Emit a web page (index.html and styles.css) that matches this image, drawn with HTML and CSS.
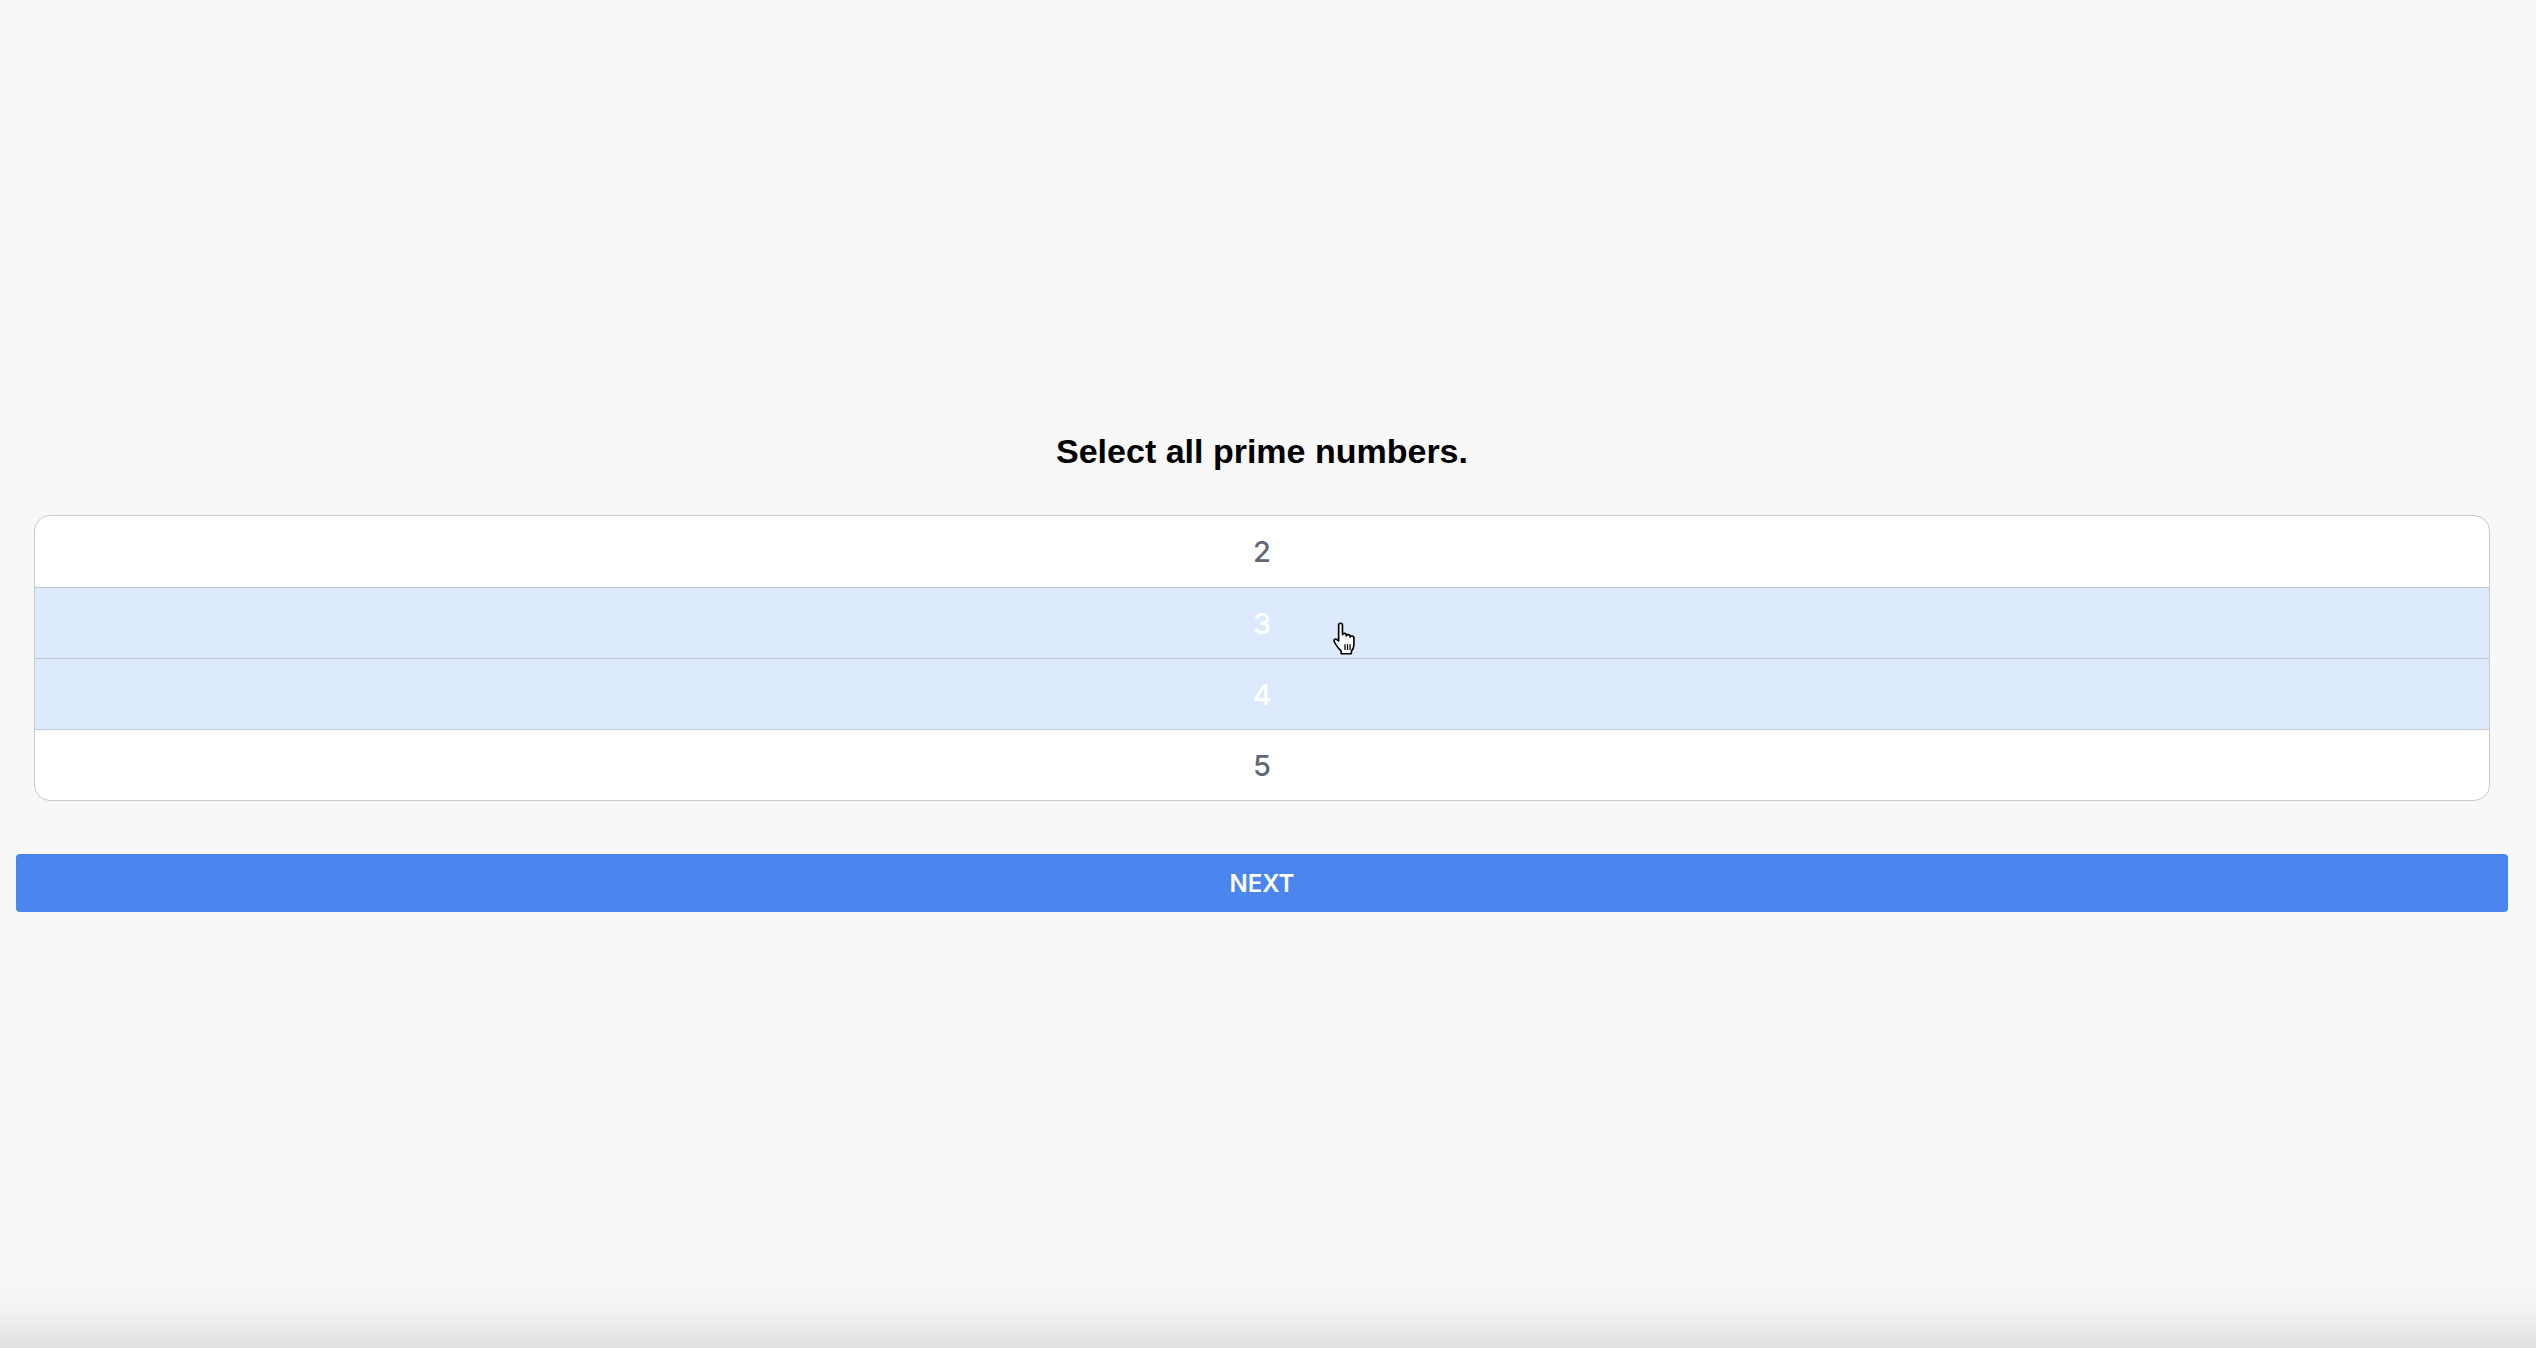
FILE: index.html
```html
<!DOCTYPE html>
<html lang="en">
<head>
<meta charset="utf-8">
<title>Quiz</title>
<link rel="stylesheet" href="styles.css">
</head>
<body>
<main class="page">
  <h1 class="question">Select all prime numbers.</h1>
  <ul class="options">
    <li class="option">2</li>
    <li class="option selected">3</li>
    <li class="option selected">4</li>
    <li class="option">5</li>
  </ul>
  <button class="next" type="button">NEXT</button>
</main>
<svg class="cursor" width="26" height="33" viewBox="0 0 20 26" aria-hidden="true">
  <path d="M5 2.5 Q5 1 6.5 1 Q8 1 8 2.5 V10 Q8 9 9.5 9 Q11 9 11 10.5 V11 Q11 10 12.5 10 Q14 10 14 11.5 V12 Q14 11 15.5 11 Q17 11 17 12.5 V18 Q17 21 15 23 V25 H7 V23 Q5 21 3 18 L1.5 15.5 Q1 14 2.5 13.5 Q3.5 13.3 4.5 14.5 L5 15 Z" fill="#fff" stroke="#000" stroke-width="1.3" stroke-linejoin="round"/>
  <path d="M10 17.5 V22 M12 17.5 V22 M14 17.5 V22" stroke="#000" stroke-width="1"/>
</svg>
<div class="edge-shade"></div>
</body>
</html>
```

FILE: styles.css
```css
html, body {
  margin: 0;
  padding: 0;
  background: #f8f8f8;
  height: 100%;
}

body {
  font-family: "Liberation Sans", Arial, sans-serif;
  overflow: hidden;
}

.page {
  display: flex;
  flex-direction: column;
  padding: 431px 28px 0 16px;
}

.question {
  margin: 0;
  font-size: 34px;
  line-height: 41px;
  font-weight: 700;
  color: #000;
  text-align: center;
}

.options {
  list-style: none;
  margin: 43px 18px 0 18px;
  padding: 0;
  background: #fff;
  border: 1px solid #c9c9c9;
  border-radius: 16px;
  overflow: hidden;
}

.option {
  height: 70px;
  display: flex;
  align-items: center;
  justify-content: center;
  font-family: Inter, "Liberation Sans", sans-serif;
  font-size: 29px;
  font-weight: 500;
  color: #5f6877;
  border-top: 1px solid #c3c9d3;
}

.option:first-child {
  border-top: none;
  height: 71px;
}

.option.selected {
  background: #dde9fc;
  color: #ffffff;
}

.next {
  margin-top: 53px;
  height: 58px;
  border: none;
  border-radius: 4px;
  background: #4a86ee;
  color: #fff;
  font-family: Inter, "Liberation Sans", sans-serif;
  font-size: 24px;
  font-weight: 600;
  cursor: pointer;
}

.cursor {
  position: fixed;
  left: 1332px;
  top: 622px;
}

.edge-shade {
  position: fixed;
  left: 0;
  right: 0;
  bottom: 0;
  height: 80px;
  background: linear-gradient(to bottom, rgba(0,0,0,0) 0%, rgba(0,0,0,0.02) 50%, rgba(0,0,0,0.09) 100%);
  pointer-events: none;
}
```
